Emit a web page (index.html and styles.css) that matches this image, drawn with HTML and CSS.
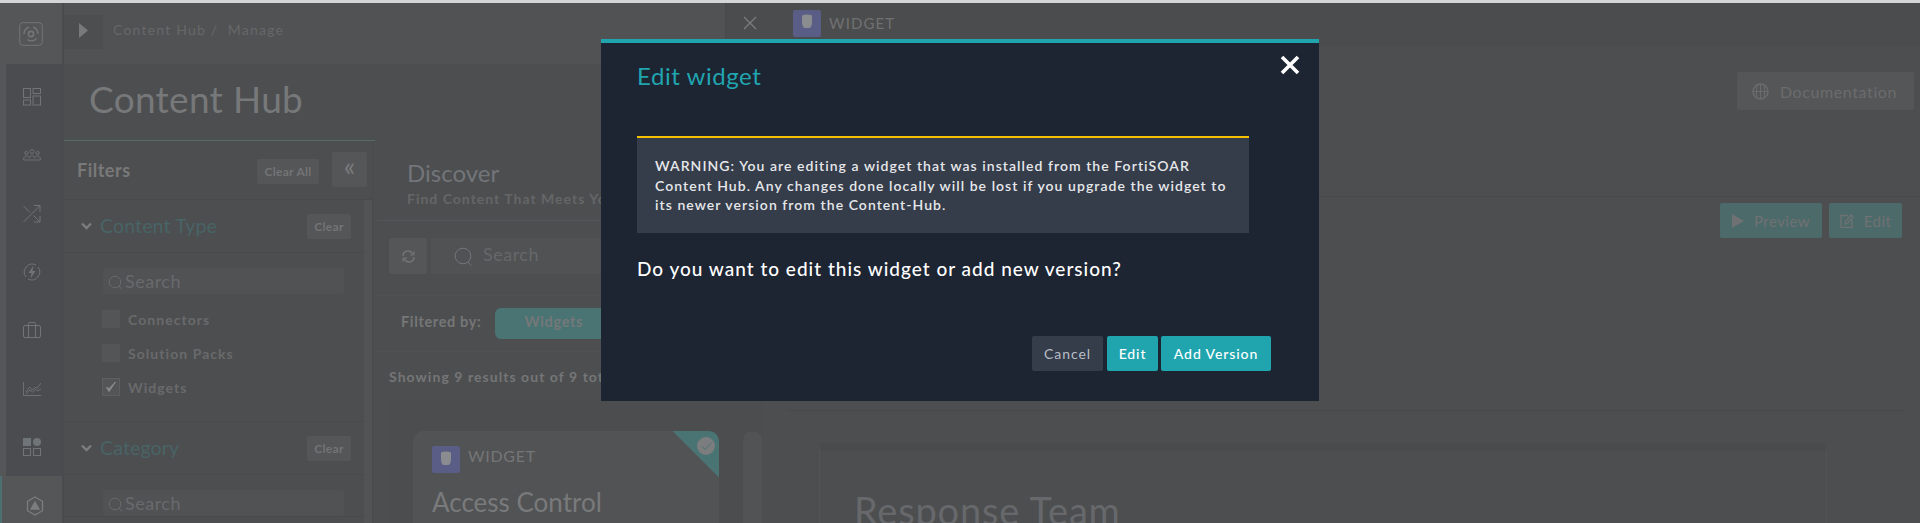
FILE: index.html
```html
<!DOCTYPE html>
<html lang="en">
<head>
    <meta charset="UTF-8">
    <meta name="viewport" content="width=device-width, initial-scale=1.0">
    <title>Content Hub</title>
    <link rel="stylesheet" href="styles.css">
</head>
<body>
<div class="stripe"></div>
<div class="app">
  <aside class="sidebar">
    <div class="logo">
      <svg width="24" height="24" viewBox="0 0 24 24" fill="none" stroke="currentColor"><rect x="0.7" y="0.7" width="22.6" height="22.6" rx="3"/><circle cx="12" cy="12" r="2.6" stroke-width="1.6"/><path d="M5 12a7 7 0 0 1 5-6.7M14 5.3A7 7 0 0 1 19 12M17.5 16.5a7 7 0 0 1-9 1.2" stroke-width="1.5"/></svg>
    </div>
    <nav class="side-nav">
      <a class="side-item"><svg width="18" height="18" viewBox="0 0 18 18" fill="none" stroke="currentColor"><rect x="0.5" y="0.5" width="7" height="9"/><rect x="10" y="0.5" width="7.5" height="5"/><rect x="0.5" y="12" width="7" height="5"/><rect x="10" y="8" width="7.5" height="9"/></svg></a>
      <a class="side-item"><svg width="18" height="12" viewBox="0 0 18 12" fill="none" stroke="currentColor" stroke-width="0.9"><circle cx="9" cy="2.5" r="2"/><circle cx="3.4" cy="4" r="1.6"/><circle cx="14.6" cy="4" r="1.6"/><path d="M0.5 11c0-3 1.5-4 3-4s2.5.6 3 2c.7-2 1.5-2.8 2.500-2.800s1.800.8 2.500 2.800c.5-1.400 1.500-2 3-2s3 1 3 4z"/></svg></a>
      <a class="side-item"><svg width="18" height="18" viewBox="0 0 18 18" fill="none" stroke="currentColor"><path d="M0.500 17L17 0.500M11 0.500h6v6M0.500 1L7 7.500M10.500 10.500L17 17M17 11v6h-6"/></svg></a>
      <a class="side-item"><svg width="18" height="18" viewBox="0 0 18 18" fill="none" stroke="currentColor"><path d="M3 14a8 8 0 0 1 10-12M15 4a8 8 0 0 1-10 12"/><path d="M10.500 2.500L5.500 10h3L7.500 15.500l5-7.500h-3z" fill="currentColor" stroke="none"/></svg></a>
      <a class="side-item"><svg width="18" height="16" viewBox="0 0 18 16" fill="none" stroke="currentColor"><rect x="0.500" y="3.500" width="17" height="12" rx="1.500"/><path d="M5.500 15.500V1.500a1 1 0 0 1 1-1h5a1 1 0 0 1 1 1v14"/></svg></a>
      <a class="side-item"><svg width="18" height="14" viewBox="0 0 18 14" fill="none" stroke="currentColor" stroke-width="0.9"><path d="M0.500 0v13.500H18M3 10l3.500-5 3 3 3-3 1.500 1.500L18 1M3 12l4-4 2.500 2 3-2.500 2 1.500 3.500-2"/></svg></a>
      <a class="side-item"><svg width="18" height="18" viewBox="0 0 18 18"><rect x="0" y="0" width="8" height="8" fill="currentColor"/><circle cx="14" cy="4" r="4" fill="currentColor"/><rect x="0.500" y="10.500" width="7" height="7" fill="none" stroke="currentColor"/><rect x="10.500" y="10.500" width="7" height="7" fill="none" stroke="currentColor"/></svg></a>
      <a class="side-item active"><svg width="18" height="20" viewBox="0 0 18 20" fill="none" stroke="currentColor" stroke-width="1.300"><path d="M9 1l7.500 4.300v9.400L9 19l-7.500-4.300V5.300z"/><path d="M9 6l4 7H5z" fill="currentColor"/></svg></a>
    </nav>
  </aside>

  <main class="main">
    <header class="topbar">
      <button class="menu-toggle"><svg width="9" height="15" viewBox="0 0 9 15"><path d="M0 0l9 7.500L0 15z" fill="currentColor"/></svg></button>
      <div class="crumbs">Content Hub&nbsp;/&nbsp; Manage</div>
    </header>
    <h1 class="page-title">Content Hub</h1>
    <div class="columns">
      <section class="filters">
        <div class="filters-head">
          <h2>Filters</h2>
          <button class="ghost clear-all">Clear All</button>
          <button class="ghost collapse">&laquo;</button>
        </div>
        <div class="filter-scroll">
          <div class="filter-group">
            <div class="group-title">
              <svg class="chev" width="11" height="8" viewBox="0 0 11 8" fill="none" stroke="currentColor" stroke-width="2.400"><path d="M1 1.500l4.500 4.500L10 1.500"/></svg>
              <span>Content Type</span>
              <button class="ghost clear">Clear</button>
            </div>
            <div class="group-body">
              <div class="side-search">
                <svg width="15" height="15" viewBox="0 0 15 15" fill="none" stroke="currentColor"><circle cx="7" cy="7" r="5.800"/><path d="M11 11l3 3.500"/></svg>
                <span>Search</span>
              </div>
              <label class="check"><i class="box"></i>Connectors</label>
              <label class="check"><i class="box"></i>Solution Packs</label>
              <label class="check"><i class="box on"><svg width="12" height="12" viewBox="0 0 12 12"><path d="M1.500 6.500l2.500 4L10.500 1 4.200 7.500z" fill="currentColor" stroke="currentColor"/></svg></i>Widgets</label>
            </div>
          </div>
          <div class="filter-group">
            <div class="group-title">
              <svg class="chev" width="11" height="8" viewBox="0 0 11 8" fill="none" stroke="currentColor" stroke-width="2.400"><path d="M1 1.500l4.500 4.500L10 1.500"/></svg>
              <span>Category</span>
              <button class="ghost clear">Clear</button>
            </div>
            <div class="group-body">
              <div class="side-search">
                <svg width="15" height="15" viewBox="0 0 15 15" fill="none" stroke="currentColor"><circle cx="7" cy="7" r="5.800"/><path d="M11 11l3 3.500"/></svg>
                <span>Search</span>
              </div>
            </div>
          </div>
        </div>
      </section>

      <section class="discover">
        <div class="discover-head">
          <h2>Discover</h2>
          <p>Find Content That Meets Your Needs</p>
        </div>
        <div class="search-row">
          <button class="ghost refresh"><svg width="15" height="13" viewBox="0 0 15 13" fill="none" stroke="currentColor" stroke-width="1.500"><path d="M2 6a5 5 0 0 1 9-3l1.500 1.500M13 7a5 5 0 0 1-9 3L2.500 8.500"/><path d="M13 1v4H9M2 12V8h4" stroke-width="1"/></svg></button>
          <div class="main-search">
            <svg width="19" height="19" viewBox="0 0 19 19" fill="none" stroke="currentColor"><circle cx="9" cy="9" r="7.800"/><path d="M14 15l3 3.500"/></svg>
            <span>Search</span>
          </div>
        </div>
        <div class="filtered-row">
          <b>Filtered by:</b>
          <span class="chip">Widgets <i>&times;</i></span>
        </div>
        <div class="results-count">Showing 9 results out of 9 total</div>
        <div class="cards">
          <article class="card">
            <span class="corner"></span>
            <span class="tick"><svg width="11" height="9" viewBox="0 0 11 9" fill="none" stroke="currentColor"><path d="M1 4.500l3 3L10 1"/></svg></span>
            <div class="card-type">
              <span class="type-icon"><svg width="12" height="15" viewBox="0 0 12 15"><path d="M1 1.500Q6-.5 11 1.500V8q0 5-2.500 6h-5Q1 13 1 8z" fill="currentColor"/></svg></span>
              WIDGET
            </div>
            <h3>Access Control</h3>
          </article>
          <article class="card next"></article>
        </div>
      </section>
    </div>
  </main>
</div>

<!-- preview drawer sits over the hub -->
<section class="drawer">
  <div class="drawer-head">
    <svg class="drawer-close" width="14" height="14" viewBox="0 0 14 14" fill="none" stroke="currentColor" stroke-width="1.400"><path d="M1 1l12 12M13 1L1 13"/></svg>
    <span class="type-icon"><svg width="12" height="15" viewBox="0 0 12 15"><path d="M1 1.500Q6-.5 11 1.500V8q0 5-2.500 6h-5Q1 13 1 8z" fill="currentColor"/></svg></span>
    <span class="drawer-type">WIDGET</span>
  </div>
  <div class="drawer-body">
    <div class="doc-row">
      <button class="ghost doc-btn"><svg width="17" height="17" viewBox="0 0 17 17" fill="none" stroke="currentColor" stroke-width="1.400"><circle cx="8.500" cy="8.500" r="7.500"/><path d="M1 8.500h15M8.500 1v15M5 2.500q-1.500 6 0 12M12 2.500q1.500 6 0 12" stroke-width="1"/></svg>Documentation</button>
    </div>
    <div class="tool-row">
      <button class="tool-btn preview-btn"><svg width="12" height="14" viewBox="0 0 12 14"><path d="M0 0l12 7L0 14z" fill="currentColor"/></svg>Preview</button>
      <button class="tool-btn edit-btn"><svg width="14" height="15" viewBox="0 0 14 15" fill="none" stroke="currentColor" stroke-width="1.300"><path d="M8 2.500H1v12h11V7M5.500 8.500L5 11l2.500-.5L13 4l-2-2z"/></svg>Edit</button>
    </div>
    <div class="preview-area">
      <div class="preview-box">
        <h2>Response Team</h2>
      </div>
    </div>
  </div>
</section>

<div class="modal">
  <h2 class="modal-title">Edit widget</h2>
  <button class="modal-close"><svg width="20" height="20" viewBox="0 0 20 20" fill="none" stroke="currentColor" stroke-width="3.600"><path d="M2 2l16 16M18 2L2 18"/></svg></button>
  <div class="warning">
    WARNING: You are editing a widget that was installed from the FortiSOAR Content Hub. Any changes done locally will be lost if you upgrade the widget to its newer version from the Content-Hub.
  </div>
  <p class="question">Do you want to edit this widget or add new version?</p>
  <div class="modal-actions">
    <button class="btn cancel">Cancel</button>
    <button class="btn primary edit">Edit</button>
    <button class="btn primary add">Add Version</button>
  </div>
</div>
</body>
</html>
```

FILE: styles.css
```css
*{
  margin: 0;
  padding: 0;
  box-sizing: border-box;
}

body{
  width: 1920px;
  height: 523px;
  overflow: hidden;
  position: relative;
  background-color: #4d4e50;
  font-family: "Lato", sans-serif;
  color: #707172;
}

button{
  font-family: inherit;
  border: none;
}

.stripe{
  height: 3px;
  background-color: #d4d5d6;
}

.app{
  display: flex;
  height: 520px;
}

/* left rail */
.sidebar{
  width: 64px;
  flex-shrink: 0;
  background-color: #555657;
  border-right: 2px solid #4a4b4c;
}
.logo{
  height: 61px;
  display: flex;
  justify-content: center;
  align-items: center;
  color: #747576;
}
.side-nav{
  margin-left: 6px;
  height: 459px;
  padding-top: 4px;
  background-color: #4b4c4f;
  color: #6f7478;
}
.side-item{
  display: flex;
  height: 58.300px;
  justify-content: center;
  align-items: center;
  padding-right: 4px;
}
.side-item.active{
  margin-left: -6px;
  height: 48px;
  padding: 12px 0 0 6px;
  background-color: #555657;
  border-left: 2px solid #4c7070;
  color: #7c7d7e;
}

/* page */
.main{
  flex: 1;
  min-width: 0;
}
.topbar{
  height: 61px;
  display: flex;
  padding-top: 12px;
  background-color: #515253;
}
.menu-toggle{
  width: 39px;
  height: 34px;
  background-color: #4d4e50;
  color: #78797a;
}
.crumbs{
  margin: 6px 0 0 10px;
  font-size: 14px;
  letter-spacing: 1.200px;
  color: #66686a;
}
.page-title{
  height: 77px;
  margin-right: 1545px;
  padding: 10px 0 0 25px;
  font-size: 37px;
  font-weight: 400;
  letter-spacing: 0.300px;
  line-height: 50px;
  color: #77787a;
  border-bottom: 1px solid #586a66;
  white-space: nowrap;
}

.columns{
  display: flex;
}

/* filters */
.filters{
  width: 309px;
  flex-shrink: 0;
  margin-right: 4px;
  border-right: 1px solid #484a4b;
}
.filters-head{
  height: 59px;
  display: flex;
  align-items: flex-start;
  padding: 11px 5px 0 13px;
  border-bottom: 1px solid #484a4c;
}
.filters-head h2{
  font-size: 18px;
  line-height: 36px;
  font-weight: 700;
  letter-spacing: 0.500px;
  color: #79797a;
  flex: 1;
}
.ghost{
  background-color: #555658;
  border-radius: 2px;
  color: #737475;
  font-weight: 700;
}
.clear-all{
  width: 62px;
  height: 25px;
  margin-top: 7px;
  font-size: 12px;
  letter-spacing: 0.300px;
}
.collapse{
  width: 35px;
  height: 35px;
  margin-left: 13px;
  font-size: 27px;
  font-weight: 400;
  line-height: 26px;
  padding-bottom: 8px;
  color: #7a7b7c;
}
.filter-scroll{
  border-right: 8px solid #525355;
  height: 323px;
}
.filter-group{
  border-bottom: 1px solid #484a4c;
}
.group-title{
  height: 53px;
  display: flex;
  align-items: center;
  padding: 0 13px 0 17px;
  border-bottom: 1px solid #484a4c;
  font-size: 19.500px;
  letter-spacing: 0.150px;
  color: #486466;
}
.group-title span{
  flex: 1;
  margin-left: 8px;
  padding-bottom: 2px;
}
.chev{
  color: #7c7d7e;
}
.clear{
  width: 44px;
  height: 25px;
  font-size: 12px;
  letter-spacing: 0.300px;
}
.group-body{
  padding: 15px 20px 0 39px;
}
.side-search{
  height: 26px;
  display: flex;
  align-items: center;
  padding-left: 2px;
  background-color: #515254;
  border-radius: 3px;
  color: #686a6c;
  font-size: 18px;
  letter-spacing: 0.500px;
  line-height: 22px;
}
.side-search svg{
  margin: 3px 2px 0 3px;
}
.check{
  display: flex;
  align-items: center;
  height: 34px;
  font-size: 14px;
  font-weight: 700;
  letter-spacing: 1.050px;
  color: #696a6b;
}
.side-search + .check{
  margin-top: 8px;
}
.box{
  width: 18px;
  height: 18px;
  margin: 0 8px 0 -1px;
  background-color: #545557;
  display: flex;
  justify-content: center;
  align-items: center;
  color: #88898a;
}
.box.on{
  border: 1px solid #5e5f61;
  color: #8a8b8c;
}
.group-body .check:last-child{
  margin-bottom: 17px;
}

/* discover */
.discover{
  flex: 1;
  min-width: 0;
}
.discover-head{
  height: 80px;
  padding: 16px 0 0 30px;
  border-bottom: 1px solid #55565a;
  background-color: #4d4e50;
}
.discover-head h2{
  font-size: 24px;
  font-weight: 400;
  line-height: 32px;
  color: #72757a;
}
.discover-head p{
  font-size: 14px;
  font-weight: 700;
  letter-spacing: 1px;
  line-height: 19px;
  color: #656667;
  white-space: nowrap;
}
.search-row{
  height: 75px;
  display: flex;
  gap: 4px;
  padding: 17px 0 0 12px;
  border-bottom: 1px solid #505153;
}
.refresh{
  width: 38px;
  height: 36px;
  padding-top: 3px;
}
.main-search{
  width: 330px;
  height: 36px;
  display: flex;
  align-items: center;
  gap: 10px;
  padding-left: 23px;
  background-color: #515254;
  color: #74757a;
  font-size: 18px;
  letter-spacing: 0.500px;
}
.main-search span{
  color: #66686a;
  padding-bottom: 4px;
}
.filtered-row{
  height: 56px;
  display: flex;
  align-items: center;
  padding-left: 24px;
  border-bottom: 1px solid #505153;
  font-size: 14.500px;
  letter-spacing: 0.650px;
  color: #757677;
}
.filtered-row b{
  padding-bottom: 4px;
}
.chip{
  width: 130px;
  height: 31px;
  margin-left: 14px;
  padding: 0 0 4px 29px;
  display: flex;
  align-items: center;
  gap: 20px;
  background-color: #4a7373;
  border-radius: 6px;
  font-weight: 700;
  color: #757879;
}
.chip i{
  font-style: normal;
}
.results-count{
  height: 49px;
  padding: 15px 0 0 12px;
  font-size: 14px;
  font-weight: 700;
  letter-spacing: 1.050px;
  line-height: 20px;
  color: #757677;
  white-space: nowrap;
}
.cards{
  height: 122px;
  margin-left: 12px;
  display: flex;
  gap: 24px;
  padding: 30px 0 0 24px;
  background-color: #4c4d4e;
}
.card{
  position: relative;
  width: 306px;
  height: 95px;
  flex-shrink: 0;
  padding: 15px 19px;
  background-color: #525355;
  border-radius: 10px 10px 0 0;
  overflow: hidden;
}
.card.next{
  width: 19px;
  padding: 0;
}
.corner{
  position: absolute;
  top: 0;
  right: 0;
  width: 47px;
  height: 47px;
  background: linear-gradient(45deg, transparent 50%, #4a7373 50%);
}
.tick{
  position: absolute;
  top: 6px;
  right: 4px;
  width: 18px;
  height: 18px;
  display: flex;
  justify-content: center;
  align-items: center;
  border-radius: 50%;
  background-color: #7c7d7e;
  color: #4a7373;
}
.card-type{
  display: flex;
  align-items: center;
  gap: 8px;
  height: 27px;
  font-size: 16px;
  letter-spacing: 0.700px;
  color: #757677;
  padding-bottom: 8px;
}
.type-icon{
  width: 28px;
  height: 27px;
  margin-bottom: -8px;
  display: flex;
  justify-content: center;
  align-items: center;
  flex-shrink: 0;
  padding-bottom: 3px;
  background-color: #5a5d85;
  border-radius: 2px;
  color: #8b8c8f;
}
.card h3{
  margin-top: 14px;
  font-size: 26px;
  font-weight: 400;
  line-height: 30px;
  white-space: nowrap;
  color: #797a7b;
}

/* drawer over the hub */
.drawer{
  position: absolute;
  top: 3px;
  left: 725px;
  right: 0;
  bottom: 0;
  display: flex;
  flex-direction: column;
}
.drawer-head{
  height: 45px;
  display: flex;
  align-items: center;
  padding: 0 0 4px 17px;
  background-color: #4b4c4d;
  border-left: 1px solid #484949;
  color: #7b7c7d;
}
.drawer-close{
  margin-right: 36px;
}
.drawer-head .type-icon{
  margin: 0;
}
.drawer-type{
  margin-left: 8px;
  font-size: 15px;
  letter-spacing: 1.100px;
  color: #707172;
}
.drawer-body{
  flex: 1;
  margin-left: 38px;
  background-color: #4d4e50;
}
.doc-row{
  height: 150px;
  display: flex;
  justify-content: flex-end;
  padding: 25px 6px 0 0;
  border-bottom: 1px solid #47494a;
}
.doc-btn{
  width: 177px;
  height: 38px;
  display: flex;
  align-items: center;
  justify-content: center;
  gap: 11px;
  padding-right: 2px;
  font-size: 16px;
  font-weight: 400;
  letter-spacing: 0.600px;
  color: #6b6c6d;
}
.tool-row{
  height: 214px;
  display: flex;
  justify-content: flex-end;
  gap: 7px;
  padding: 6px 3px 0 0;
  margin: 0 15px 0 24px;
  border-bottom: 1px solid #47494a;
}
.tool-btn{
  height: 35px;
  display: flex;
  align-items: center;
  justify-content: center;
  gap: 10px;
  background-color: #4d6a6b;
  border-radius: 2px;
  font-size: 15px;
  letter-spacing: 0.450px;
  color: #707172;
}
.preview-btn{
  width: 102px;
}
.edit-btn{
  width: 73px;
}
.preview-area{
  padding: 32px 93px 0 56px;
}
.preview-box{
  height: 80px;
  padding: 39px 0 0 34px;
  border: 1px solid #535455;
  border-top: 8px solid #4a4b4d;
  border-bottom: none;
  overflow: hidden;
}
.preview-box h2{
  font-size: 38px;
  font-weight: 400;
  letter-spacing: 0.800px;
  line-height: 40px;
  white-space: nowrap;
  color: #66686b;
}

/* modal */
.modal{
  position: absolute;
  top: 39px;
  left: 601px;
  width: 718px;
  height: 362px;
  padding: 19px 36px 0;
  background-color: #1d2432;
  border-top: 4px solid #20a5af;
  color: #fff;
}
.modal-title{
  height: 74px;
  font-size: 24px;
  font-weight: 400;
  letter-spacing: 0.550px;
  line-height: 28px;
  color: #20a5af;
}
.modal-close{
  position: absolute;
  top: 12px;
  right: 19px;
  width: 20px;
  height: 20px;
  background: none;
  color: #fff;
}
.warning{
  width: 612px;
  height: 97px;
  padding: 18px 14px 0 18px;
  background-color: #353c4a;
  border-top: 2px solid #f5c000;
  font-size: 14px;
  font-weight: 600;
  letter-spacing: 1.050px;
  line-height: 19.600px;
  color: #e6e8ea;
}
.question{
  margin-top: 25px;
  font-size: 19px;
  font-weight: 500;
  letter-spacing: 1px;
  line-height: 22px;
}
.modal-actions{
  margin: 56px 12px 0 0;
  display: flex;
  justify-content: flex-end;
  gap: 3px;
}
.btn{
  height: 35px;
  border-radius: 2px;
  font-size: 14px;
  letter-spacing: 0.900px;
}
.cancel{
  width: 71px;
  margin-right: 1px;
  background-color: #353c4a;
  color: #b8bdc6;
}
.primary{
  background-color: #20a5af;
  color: #fff;
  font-weight: 500;
}
.edit{
  width: 51px;
}
.add{
  width: 110px;
}
```
